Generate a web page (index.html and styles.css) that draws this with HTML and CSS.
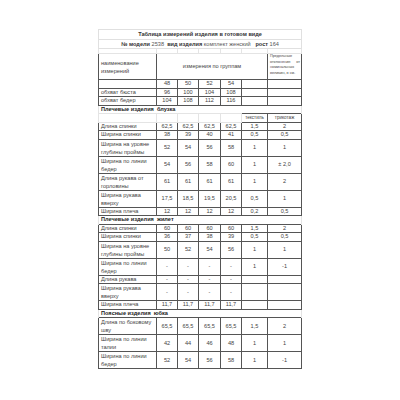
FILE: index.html
```
<!DOCTYPE html>
<html lang="ru">
<head>
<meta charset="utf-8">
<title>Таблица измерений</title>
<link rel="stylesheet" href="styles.css">
</head>
<body>
<div class="sheet">
<table class="tbl">
<colgroup>
<col class="c-label"><col class="c-n1"><col class="c-n2"><col class="c-n3"><col class="c-n4"><col class="c-tex"><col class="c-knit">
</colgroup>
<tbody>
<tr class="h-title"><td colspan="7" class="title">Таблица измерений изделия в готовом виде</td></tr>
<tr class="h-model"><td colspan="7" class="model"><b>№ модели</b> 2538&nbsp; <b>вид изделия</b> комплект женский&nbsp;&nbsp; <b>рост</b> 164</td></tr>
<tr class="h-empty"><td class="g"></td><td class="g"></td><td class="g"></td><td class="g"></td><td class="g"></td><td class="g"></td><td class="g"></td></tr>
<tr class="h-head"><td class="d lbl two">наименование<br>измерений</td><td colspan="5" class="d num">измерения по группам</td><td class="d tiny">Предельные отклонения от номинальных величин, в см.</td></tr>
<tr class="s"><td class="d"></td><td class="d num">48</td><td class="d num">50</td><td class="d num">52</td><td class="d num">54</td><td class="d"></td><td class="d"></td></tr>
<tr class="s"><td class="d lbl">обхват бюста</td><td class="d num">96</td><td class="d num">100</td><td class="d num">104</td><td class="d num">108</td><td class="d"></td><td class="d"></td></tr>
<tr class="s"><td class="d lbl">обхват бедер</td><td class="d num">104</td><td class="d num">108</td><td class="d num">112</td><td class="d num">116</td><td class="d"></td><td class="d"></td></tr>
<tr class="s"><td colspan="7" class="sec">Плечевые изделия&nbsp; блузка</td></tr>
<tr class="s"><td class="g"></td><td class="g"></td><td class="g"></td><td class="g"></td><td class="g"></td><td class="d small">текстиль</td><td class="d small">трикотаж</td></tr>
<tr class="s"><td class="d lbl">Длина спинки</td><td class="d num">62,5</td><td class="d num">62,5</td><td class="d num">62,5</td><td class="d num">62,5</td><td class="d num">1,5</td><td class="d num">2</td></tr>
<tr class="s"><td class="d lbl">Ширина спинки</td><td class="d num">38</td><td class="d num">39</td><td class="d num">40</td><td class="d num">41</td><td class="d num">0,5</td><td class="d num">0,5</td></tr>
<tr class="w"><td class="d lbl two">Ширина на уровне<br>глубины проймы</td><td class="d num">52</td><td class="d num">54</td><td class="d num">56</td><td class="d num">58</td><td class="d num">1</td><td class="d num">1</td></tr>
<tr class="w"><td class="d lbl two">Ширина по линии<br>бедер</td><td class="d num">54</td><td class="d num">56</td><td class="d num">58</td><td class="d num">60</td><td class="d num">1</td><td class="d num">± 2,0</td></tr>
<tr class="w"><td class="d lbl two">Длина рукава от<br>горловины</td><td class="d num">61</td><td class="d num">61</td><td class="d num">61</td><td class="d num">61</td><td class="d num">1</td><td class="d num">2</td></tr>
<tr class="w"><td class="d lbl two">Ширина рукава<br>вверху</td><td class="d num">17,5</td><td class="d num">18,5</td><td class="d num">19,5</td><td class="d num">20,5</td><td class="d num">0,5</td><td class="d num">1</td></tr>
<tr class="s"><td class="d lbl">Ширина плеча</td><td class="d num">12</td><td class="d num">12</td><td class="d num">12</td><td class="d num">12</td><td class="d num">0,2</td><td class="d num">0,5</td></tr>
<tr class="s"><td colspan="7" class="sec">Плечевые изделия&nbsp; жилет</td></tr>
<tr class="s"><td class="d lbl">Длина спинки</td><td class="d num">60</td><td class="d num">60</td><td class="d num">60</td><td class="d num">60</td><td class="d num">1,5</td><td class="d num">2</td></tr>
<tr class="s"><td class="d lbl">Ширина спинки</td><td class="d num">36</td><td class="d num">37</td><td class="d num">38</td><td class="d num">39</td><td class="d num">0,5</td><td class="d num">0,5</td></tr>
<tr class="w"><td class="d lbl two">Ширина на уровне<br>глубины проймы</td><td class="d num">50</td><td class="d num">52</td><td class="d num">54</td><td class="d num">56</td><td class="d num">1</td><td class="d num">1</td></tr>
<tr class="w"><td class="d lbl two">Ширина по линии<br>бедер</td><td class="d num">-</td><td class="d num">-</td><td class="d num">-</td><td class="d num">-</td><td class="d num">1</td><td class="d num">-1</td></tr>
<tr class="s"><td class="d lbl">Длина рукава</td><td class="d num">-</td><td class="d num">-</td><td class="d num">-</td><td class="d num">-</td><td class="d"></td><td class="d"></td></tr>
<tr class="w"><td class="d lbl two">Ширина рукава<br>вверху</td><td class="d num">-</td><td class="d num">-</td><td class="d num">-</td><td class="d num">-</td><td class="d"></td><td class="d"></td></tr>
<tr class="s"><td class="d lbl">Ширина плеча</td><td class="d num">11,7</td><td class="d num">11,7</td><td class="d num">11,7</td><td class="d num">11,7</td><td class="d"></td><td class="d"></td></tr>
<tr class="s"><td colspan="7" class="sec">Поясные изделия&nbsp; юбка</td></tr>
<tr class="w"><td class="d lbl two">Длина по боковому<br>шву</td><td class="d num">65,5</td><td class="d num">65,5</td><td class="d num">65,5</td><td class="d num">65,5</td><td class="d num">1,5</td><td class="d num">2</td></tr>
<tr class="w"><td class="d lbl two">Ширина по линии<br>талии</td><td class="d num">42</td><td class="d num">44</td><td class="d num">46</td><td class="d num">48</td><td class="d num">1</td><td class="d num">1</td></tr>
<tr class="w"><td class="d lbl two">Ширина по линии<br>бедер</td><td class="d num">52</td><td class="d num">54</td><td class="d num">56</td><td class="d num">58</td><td class="d num">1</td><td class="d num">-1</td></tr>
</tbody>
</table>
</div>
</body>
</html>
```
FILE: styles.css
```
html, body {
  margin: 0;
  padding: 0;
  background: #ffffff;
}
.sheet {
  padding: 29px 0 0 98px;
}
.tbl {
  border-collapse: collapse;
  table-layout: fixed;
  width: 203px;
  font-family: "Liberation Sans", Arial, sans-serif;
  font-size: 5.6px;
  color: #444;
}
.c-label { width: 58px; }
.c-n1 { width: 21px; }
.c-n2 { width: 21px; }
.c-n3 { width: 22px; }
.c-n4 { width: 21px; }
.c-tex { width: 26px; }
.c-knit { width: 34px; }
td {
  padding: 0;
  line-height: 7px;
  white-space: nowrap;
  overflow: hidden;
}
td.two { line-height: 8px; }
.h-title { height: 10px; }
.h-model { height: 9px; }
.h-empty { height: 5px; }
.h-head { height: 26px; }
tr.s { height: 8.5px; }
tr.w { height: 17px; }
.title {
  border: 1px solid #e0e0e0;
  text-align: center;
  font-weight: bold;
  color: #333;
}
.model {
  border: 1px solid #e0e0e0;
  text-align: center;
  color: #555;
}
.model b { color: #333; }
.g { border: 1px solid #e4e4e4; }
.d { border: 1px solid #555; }
.lbl {
  text-align: left;
  padding-left: 2px;
}
.num { text-align: center; }
.small {
  text-align: center;
  font-size: 4.6px;
}
.sec {
  font-weight: bold;
  color: #222;
  padding-left: 2px;
  border-left: 1px solid #e4e4e4;
  border-right: 1px solid #e4e4e4;
}
.tiny {
  font-size: 3.8px;
  line-height: 5.4px;
  white-space: normal;
  text-align: justify;
  vertical-align: bottom;
  padding: 0 1px 3px 2px;
}
```
